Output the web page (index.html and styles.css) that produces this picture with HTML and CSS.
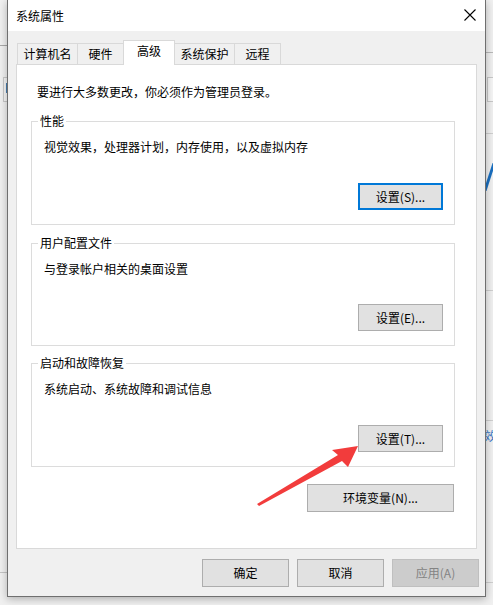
FILE: index.html
```html
<!DOCTYPE html>
<html lang="zh-CN">
<head>
<meta charset="utf-8">
<title>系统属性</title>
<link rel="stylesheet" href="styles.css">
</head>
<body>
<div class="desktop">
  <div class="bg bg-line bg-l1"></div>
  <div class="bg bg-box bg-lbox"><span class="bg-blue"></span></div>
  <div class="bg bg-line bg-l2"></div>
  <div class="bg bg-line bg-r1"></div>
  <div class="bg bg-box bg-rbox"></div>
  <div class="bg bg-line bg-r2"></div>
  <div class="bg bg-slash"></div>
  <div class="bg bg-line bg-r3"></div>
  <div class="bg bg-line bg-r4"></div>
  <div class="bg bg-text">效</div>
  <div class="bg bg-line bg-r5"></div>

  <div class="dialog">
    <div class="titlebar">
      <span class="title">系统属性</span>
      <svg class="close" width="12" height="12" viewBox="0 0 12 12"><path d="M0.5 0.5 L11.5 11.5 M11.5 0.5 L0.5 11.5" stroke="#000" stroke-width="1.1" fill="none"/></svg>
    </div>
    <div class="body">
      <div class="tabs">
        <div class="tab tab-wide">计算机名</div>
        <div class="tab">硬件</div>
        <div class="tab tab-active">高级</div>
        <div class="tab tab-wide">系统保护</div>
        <div class="tab">远程</div>
      </div>
      <div class="panel">
        <div class="intro">要进行大多数更改，你必须作为管理员登录。</div>
        <div class="group group-1">
          <span class="legend">性能</span>
          <div class="group-text">视觉效果，处理器计划，内存使用，以及虚拟内存</div>
          <div class="btn btn-focus">设置(S)...</div>
        </div>
        <div class="group group-2">
          <span class="legend">用户配置文件</span>
          <div class="group-text">与登录帐户相关的桌面设置</div>
          <div class="btn">设置(E)...</div>
        </div>
        <div class="group group-3">
          <span class="legend">启动和故障恢复</span>
          <div class="group-text">系统启动、系统故障和调试信息</div>
          <div class="btn">设置(T)...</div>
        </div>
        <div class="env-row">
          <div class="btn btn-env">环境变量(N)...</div>
        </div>
      </div>
      <div class="footer">
        <div class="btn btn-foot">确定</div>
        <div class="btn btn-foot">取消</div>
        <div class="btn btn-foot btn-disabled">应用(A)</div>
      </div>
    </div>
  </div>

  <svg class="arrow" width="493" height="605" viewBox="0 0 493 605">
    <polygon points="257,504 338,455 332,450 358,446 348,467 342,461 259,506" fill="#f23c3c"/>
  </svg>
</div>
</body>
</html>
```

FILE: styles.css
```css
* { box-sizing: border-box; }

html, body {
  margin: 0;
  padding: 0;
}

body {
  font-family: "Noto Sans CJK SC", "Noto Sans", sans-serif;
  font-size: 12px;
  color: #000;
  background: #f0f0f0;
}

.desktop {
  position: relative;
  width: 493px;
  height: 605px;
  overflow: hidden;
  background: #f0f0f0;
}

/* background window fragments behind the dialog */
.bg { position: absolute; }
.bg-line { height: 1px; background: #b9b9b9; }
.bg-l1 { left: 0; top: 45px; width: 8px; background: #a8a8a8; }
.bg-l2 { left: 0; top: 572px; width: 8px; background: #c4c4c4; }
.bg-lbox { left: 3px; top: 77px; width: 6px; height: 25px; border: 1px solid #c8c8c8; background: #f5f5f5; }
.bg-blue { position: absolute; left: 2px; top: 5px; width: 3px; height: 10px; background: #4a7fb0; }
.bg-r1 { left: 486px; top: 52px; width: 7px; }
.bg-rbox { left: 487px; top: 77px; width: 8px; height: 25px; border: 1px solid #c8c8c8; background: #f5f5f5; }
.bg-r2 { left: 486px; top: 133px; width: 7px; background: #cfcfcf; }
.bg-slash { left: 488px; top: 163px; width: 3px; height: 28px; background: #1a6fc0; transform: skewX(-18deg); }
.bg-r3 { left: 486px; top: 290px; width: 7px; background: #cfcfcf; }
.bg-r4 { left: 486px; top: 420px; width: 7px; background: #cfcfcf; }
.bg-text { left: 484px; top: 428px; font-size: 12px; line-height: 16px; color: #3a78c8; }
.bg-r5 { left: 486px; top: 582px; width: 7px; background: #cfcfcf; }

/* dialog window */
.dialog {
  position: relative;
  z-index: 1;
  margin-left: 7px;
  width: 479px;
  height: 597px;
  border: 1px solid #6f6f6f;
  border-top: none;
  background: #f0f0f0;
  box-shadow: 0 2px 8px rgba(0, 0, 0, 0.28);
  display: flex;
  flex-direction: column;
}

.titlebar {
  height: 31px;
  background: #fff;
  display: flex;
  align-items: center;
  justify-content: space-between;
  padding: 0 9px 0 8px;
}

.title {
  line-height: 16px;
}

.close {
  display: block;
  margin-top: -1px;
}

.body {
  flex: 1;
  padding: 9px 8px 0 8px;
  display: flex;
  flex-direction: column;
}

.tabs {
  display: flex;
  align-items: flex-end;
  height: 24px;
  padding-left: 1px;
}

.tab {
  height: 21px;
  min-width: 47px;
  padding: 0 5px;
  border: 1px solid #d9d9d9;
  border-bottom: none;
  background: #f0f0f0;
  display: flex;
  align-items: center;
  justify-content: center;
  line-height: 16px;
  margin-left: -1px;
}

.tab:first-child { margin-left: 0; }
.tab-wide { min-width: 61px; }
.tab-wide + .tab-wide { min-width: 59px; }

.tab-active {
  position: relative;
  z-index: 2;
  height: 25px;
  min-width: 52px;
  margin-bottom: -1px;
  background: #fff;
  align-items: flex-start;
  padding-top: 2px;
}

.panel {
  height: 485px;
  background: #fff;
  border: 1px solid #d9d9d9;
  padding: 19px 21px 0 14px;
  display: flex;
  flex-direction: column;
}

.intro {
  line-height: 16px;
  margin-left: 6px;
}

.group {
  position: relative;
  border: 1px solid #dcdcdc;
  padding: 17px 11px 14px 12px;
  display: flex;
  flex-direction: column;
  justify-content: space-between;
  align-items: flex-start;
}

.group-1 { height: 104px; margin-top: 21px; }
.group-2 { height: 103px; margin-top: 18px; }
.group-3 { height: 104px; margin-top: 17px; }

.legend {
  position: absolute;
  left: 6px;
  top: -9px;
  padding: 0 2px;
  background: #fff;
  line-height: 16px;
}

.group-text {
  line-height: 16px;
}

.btn {
  width: 85px;
  height: 27px;
  border: 1px solid #adadad;
  background: #e1e1e1;
  display: flex;
  align-items: center;
  justify-content: center;
  line-height: 16px;
  align-self: flex-end;
}

.btn-focus {
  border: 2px solid #0078d7;
}

.env-row {
  margin-top: 17px;
  display: flex;
  justify-content: flex-end;
  padding-right: 1px;
}

.btn-env {
  width: 147px;
  height: 28px;
}

.footer {
  display: flex;
  justify-content: flex-end;
  gap: 8px;
  padding-top: 10px;
  margin-right: -2px;
}

.btn-foot {
  width: 87px;
  height: 28px;
}

.btn-disabled {
  background: #cccccc;
  border-color: #bfbfbf;
  color: #838383;
}

.arrow {
  position: absolute;
  left: 0;
  top: 0;
  z-index: 5;
  pointer-events: none;
}
```
